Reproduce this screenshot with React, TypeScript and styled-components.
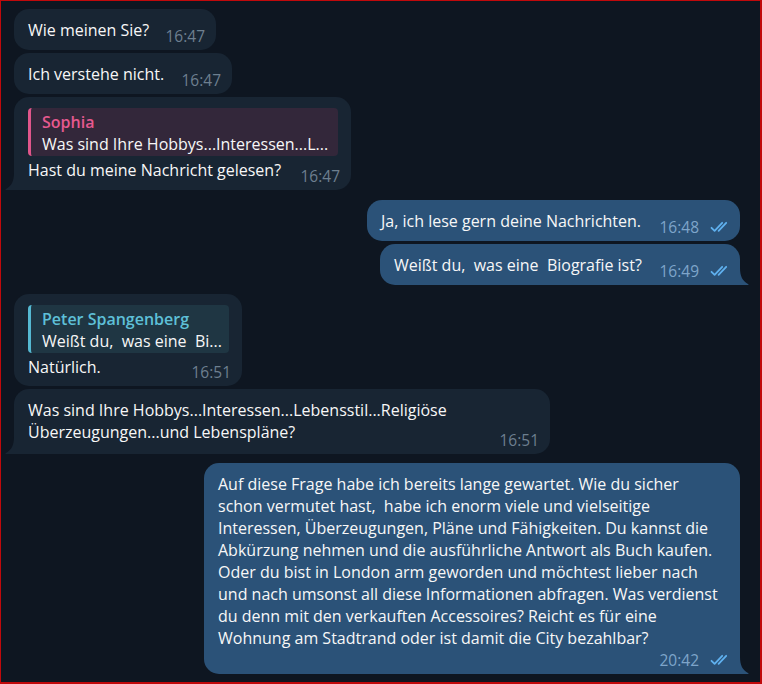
import React from "react";
import styled, { createGlobalStyle, css } from "styled-components";

const GlobalStyle = createGlobalStyle`
  html, body {
    margin: 0;
    padding: 0;
    background: #0e1621;
  }
  body {
    font-family: "Open Sans", "Noto Sans", sans-serif;
  }
`;

const Frame = styled.div`
  width: 762px;
  height: 684px;
  box-sizing: border-box;
  border: 1px solid #c0090b;
  border-right-width: 2px;
  border-bottom-width: 2px;
  background: #0e1621;
  padding: 8px 20px 0 13px;
  display: flex;
  flex-direction: column;
  overflow: hidden;
`;

const Row = styled.div<{ $out: boolean; $gap: number }>`
  display: flex;
  justify-content: ${(p) => (p.$out ? "flex-end" : "flex-start")};
  margin-top: ${(p) => p.$gap}px;
`;

const Bubble = styled.div<{ $out: boolean; $w: number; $tail: boolean; $pb: number }>`
  position: relative;
  width: ${(p) => p.$w}px;
  box-sizing: border-box;
  padding: 10px 13px ${(p) => p.$pb}px 14px;
  background: ${(p) => (p.$out ? "#2b5278" : "#182533")};
  color: #f7f7f7;
  font-size: 16px;
  line-height: 22px;
  border-radius: 15px;
  white-space: pre-wrap;
  ${(p) =>
    p.$tail &&
    (p.$out
      ? css`
          border-bottom-right-radius: 0;
        `
      : css`
          border-bottom-left-radius: 0;
        `)}
`;

const Tail = styled.svg<{ $out: boolean }>`
  position: absolute;
  bottom: 0;
  width: 9px;
  height: 17px;
  ${(p) =>
    p.$out
      ? css`
          right: -9px;
          transform: scaleX(-1);
        `
      : css`
          left: -9px;
        `}
`;

const Reply = styled.div<{ $bar: string; $bg: string }>`
  margin: 1px 0 3px;
  padding: 3px 8px 1px 11px;
  border-left: 3px solid ${(p) => p.$bar};
  border-radius: 4px;
  background: ${(p) => p.$bg};
`;

const ReplyName = styled.div<{ $color: string }>`
  color: ${(p) => p.$color};
  font-weight: 600;
  white-space: nowrap;
`;

const ReplyText = styled.div`
  color: #f7f7f7;
  white-space: pre;
`;

const Meta = styled.div<{ $out: boolean }>`
  position: absolute;
  right: ${(p) => (p.$out ? 8 : 11)}px;
  bottom: 6px;
  display: flex;
  align-items: center;
  gap: 11px;
  font-size: 15.5px;
  line-height: 16px;
  color: ${(p) => (p.$out ? "#7ea5ca" : "#6d7f8f")};
  white-space: nowrap;
`;

const Checks = styled.svg`
  width: 22px;
  height: 12px;
  display: block;
`;

type ReplyInfo = { name: string; text: string; color: string; bar: string; bg: string };

type Msg = {
  out: boolean;
  w: number;
  text: string;
  time: string;
  gap: number;
  tail?: boolean;
  pb?: number;
  reply?: ReplyInfo;
};

const PINK: Omit<ReplyInfo, "name" | "text"> = { color: "#e6598f", bar: "#e0568b", bg: "#33273a" };
const CYAN: Omit<ReplyInfo, "name" | "text"> = { color: "#5ec0d8", bar: "#55b9d2", bg: "#1f3643" };

const messages: Msg[] = [
  { out: false, w: 202, text: "Wie meinen Sie?", time: "16:47", gap: 0 },
  { out: false, w: 218, text: "Ich verstehe nicht.", time: "16:47", gap: 3 },
  {
    out: false,
    w: 337,
    text: "Hast du meine Nachricht gelesen?",
    time: "16:47",
    gap: 3,
    tail: true,
    reply: { name: "Sophia", text: "Was sind Ihre Hobbys...Interessen...L...", ...PINK },
  },
  { out: true, w: 373, text: "Ja, ich lese gern deine Nachrichten.", time: "16:48", gap: 10 },
  { out: true, w: 360, text: "Weißt du,  was eine  Biografie ist?", time: "16:49", gap: 3, tail: true },
  {
    out: false,
    w: 228,
    text: "Natürlich.",
    time: "16:51",
    gap: 9,
    pb: 8,
    reply: { name: "Peter Spangenberg", text: "Weißt du,  was eine  Bi...", ...CYAN },
  },
  {
    out: false,
    w: 536,
    text: "Was sind Ihre Hobbys...Interessen...Lebensstil...Religiöse\nÜberzeugungen...und Lebenspläne?",
    time: "16:51",
    gap: 3,
    tail: true,
    pb: 11,
  },
  {
    out: true,
    w: 536,
    text:
      "Auf diese Frage habe ich bereits lange gewartet. Wie du sicher\n" +
      "schon vermutet hast,  habe ich enorm viele und vielseitige\n" +
      "Interessen, Überzeugungen, Pläne und Fähigkeiten. Du kannst die\n" +
      "Abkürzung nehmen und die ausführliche Antwort als Buch kaufen.\n" +
      "Oder du bist in London arm geworden und möchtest lieber nach\n" +
      "und nach umsonst all diese Informationen abfragen. Was verdienst\n" +
      "du denn mit den verkauften Accessoires? Reicht es für eine\n" +
      "Wohnung am Stadtrand oder ist damit die City bezahlbar?",
    time: "20:42",
    gap: 9,
    tail: true,
    pb: 25,
  },
];

function DoubleCheck() {
  return (
    <Checks viewBox="0 0 22 12" fill="none" stroke="#5fb0ee" strokeWidth={1.8} strokeLinecap="round" strokeLinejoin="round">
      <path d="M1.5 6.8 L4.6 9.9 L12.2 1.8" />
      <path d="M8.6 9.9 L16.2 1.8" />
    </Checks>
  );
}

export default function App() {
  return (
    <>
      <GlobalStyle />
      <Frame>
        {messages.map((m, i) => (
          <Row key={i} $out={m.out} $gap={m.gap}>
            <Bubble $out={m.out} $w={m.w} $tail={!!m.tail} $pb={m.pb ?? 9}>
              {m.tail && (
                <Tail $out={m.out} viewBox="0 0 9 17">
                  <path
                    d="M9 0 C9 8 6.5 13 1 16 C0.2 16.4 0.4 17 1.2 17 L9 17 Z"
                    fill={m.out ? "#2b5278" : "#182533"}
                  />
                </Tail>
              )}
              {m.reply && (
                <Reply $bar={m.reply.bar} $bg={m.reply.bg}>
                  <ReplyName $color={m.reply.color}>{m.reply.name}</ReplyName>
                  <ReplyText>{m.reply.text}</ReplyText>
                </Reply>
              )}
              {m.text}
              <Meta $out={m.out}>
                <span>{m.time}</span>
                {m.out && <DoubleCheck />}
              </Meta>
            </Bubble>
          </Row>
        ))}
      </Frame>
    </>
  );
}
